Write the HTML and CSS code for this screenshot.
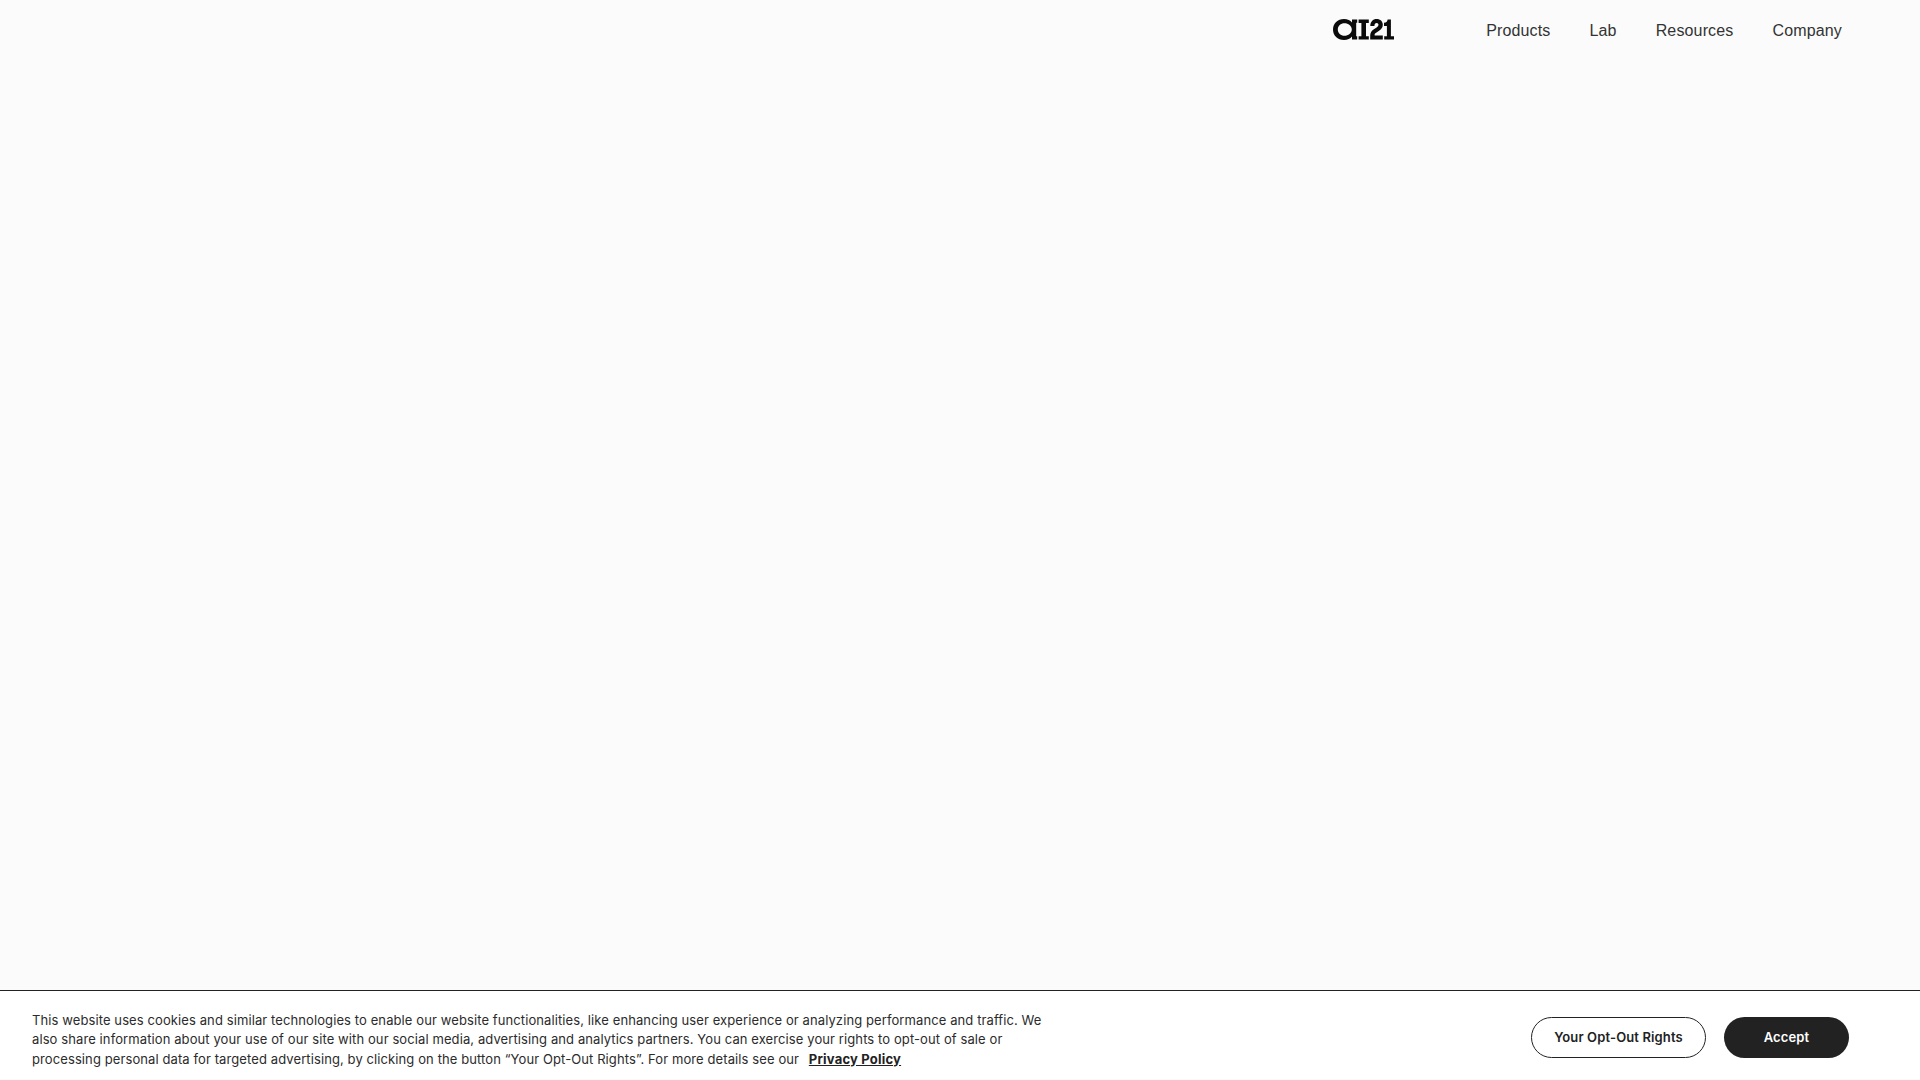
FILE: index.html
```html
<!DOCTYPE html>
<html lang="en">
<head>
    <meta charset="UTF-8">
    <title>AI21</title>
    <link rel="stylesheet" href="styles.css">
</head>
<body>
    <header class="top-bar">
        <a href="#" class="logo" aria-label="AI21">
            <svg width="62" height="21" viewBox="0 0 62 21" fill="#0b0b0b">
                <!-- a -->
                <path fill-rule="evenodd" d="M11 0C14.600 0 17.400 1.300 19 3.400V.5H24.200V3.800H23.200V17.200H24.200V20.600H19V17.600C17.400 19.700 14.600 21 11 21 4.600 21 0 16.500 0 10.500S4.600 0 11 0ZM11.500 4.200C7.700 4.200 4.800 6.800 4.800 10.500S7.700 16.800 11.500 16.800 18.800 14.200 18.800 10.500 15.300 4.200 11.500 4.200Z"/>
                <!-- I -->
                <path d="M25.600.5H35.800V3.900H33V17.200H35.800V20.600H25.600V17.200H28.400V3.900H25.600Z"/>
                <!-- 2 -->
                <path d="M37.300 7C37.300 2.700 39.900 0 43.600 0S49.800 2.400 49.800 5.700C49.800 8.500 48.300 10.400 45.700 12.100L42.400 14.300C41.800 14.700 41.600 15.300 41.600 16.400H49.800V20.600H37.200V16.800C37.200 13.700 38.400 12 40.900 10.300L44 8.200C45 7.500 45.500 6.700 45.500 5.800 45.500 4.700 44.800 3.900 43.600 3.900 42.300 3.900 41.400 5 41.400 7Z"/>
                <!-- 1 -->
                <path d="M51 3.800C53.200 3.800 54.300 2.700 54.600.5H57.900V17.200H61V20.600H51.200V17.200H53.900V6.900H51Z"/>
            </svg>
        </a>
        <nav class="main-nav">
            <a href="#">Products</a>
            <a href="#">Lab</a>
            <a href="#">Resources</a>
            <a href="#">Company</a>
        </nav>
    </header>
    <main class="page-body"></main>
    <section class="cookie-bar">
        <p class="cookie-text">This website uses cookies and similar technologies to enable our website functionalities, like enhancing user experience or analyzing performance and traffic. We also share information about your use of our site with our social media, advertising and analytics partners. You can exercise your rights to opt-out of sale or processing personal data for targeted advertising, by clicking on the button “Your Opt-Out Rights”. For more details see our <a href="#">Privacy Policy</a></p>
        <div class="cookie-buttons">
            <button class="btn btn-outline">Your Opt-Out Rights</button>
            <button class="btn btn-dark">Accept</button>
        </div>
    </section>
</body>
</html>
```

FILE: styles.css
```css
html, body {
    height: 100%;
}
body {
    margin: 0;
    display: flex;
    flex-direction: column;
    overflow: hidden;
    background-color: #fbfbfb;
    font-family: "Inter", sans-serif;
    color: #222;
}
.top-bar {
    display: flex;
    justify-content: flex-end;
    align-items: center;
    height: 60px;
    padding-right: 78px;
}
.logo {
    display: flex;
    margin-right: 91px;
    margin-top: -1px;
}
.main-nav {
    display: flex;
    gap: 39px;
    margin-top: 1px;
}
.main-nav a {
    font-family: "Liberation Sans", sans-serif;
    font-size: 16px;
    letter-spacing: 0.15px;
    color: #333;
    text-decoration: none;
}
.page-body {
    flex: 1;
}
.cookie-bar {
    display: flex;
    justify-content: space-between;
    align-items: flex-start;
    box-sizing: border-box;
    height: 89px;
    margin-bottom: 1px;
    padding: 20px 71px 0 32px;
    border-top: 1px solid #222;
    background-color: #fff;
}
.cookie-text {
    width: 1020px;
    margin: 0;
    font-size: 13px;
    line-height: 19.4px;
    letter-spacing: 0.1px;
    color: #2b2b2b;
}
.cookie-text a {
    margin-left: 6px;
    font-weight: 700;
    letter-spacing: 0.2px;
    color: #222;
}
.cookie-buttons {
    display: flex;
    gap: 18px;
    margin-top: 6px;
}
.btn {
    height: 41px;
    padding: 0 0 1px;
    border-radius: 21px;
    font-family: "Inter", sans-serif;
    font-size: 13px;
    font-weight: 600;
    letter-spacing: 0.13px;
}
.btn-outline {
    width: 175px;
    border: 1px solid #222;
    background-color: #fff;
    color: #222;
}
.btn-dark {
    width: 125px;
    border: none;
    background-color: #222;
    color: #fff;
}
```
